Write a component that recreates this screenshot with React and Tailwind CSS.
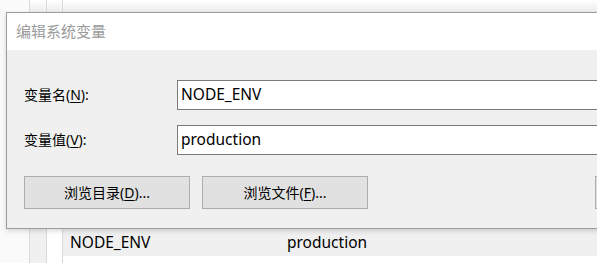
const ui = { fontFamily: '"Noto Sans", "Noto Sans CJK SC", sans-serif' };

const Field = ({ label, mnemonic, value }) => (
  <div className="flex items-center h-[30px]">
    <div className="w-[153px] shrink-0 text-[14px] text-black leading-none">
      {label}(<span className="underline underline-offset-2">{mnemonic}</span>):
    </div>
    <div className="flex-1 h-[30px] bg-white border border-[#7a7a7a] flex items-center pl-[3px] text-[15.5px] text-black">
      {value}
    </div>
  </div>
);

const Btn = ({ label, mnemonic, className = '' }) => (
  <button
    className={`h-[33px] w-[166px] shrink-0 bg-[#e1e1e1] border border-[#adadad] text-[14px] text-black flex items-center justify-center ${className}`}
  >
    {label && (
      <>
        {label}(<span className="underline underline-offset-2">{mnemonic}</span>)...
      </>
    )}
  </button>
);

export default function App() {
  return (
    <div className="relative w-[597px] h-[263px] overflow-hidden bg-white" style={ui}>
      {/* window behind the dialog */}
      <div className="flex h-full">
        <div className="w-[30px] shrink-0 h-full bg-[#fafafa] border-r border-[#dadada]" />
        <div className="w-[17px] shrink-0 h-full flex flex-col border-r border-[#dadada]">
          <div className="h-[12px] shrink-0 bg-gradient-to-b from-white to-[#ececec]" />
          <div className="flex-1 bg-[#f0f0f0]" />
        </div>
        <div className="w-[16px] shrink-0 h-full flex flex-col border-r border-[#dadada]">
          <div className="h-[12px] shrink-0 bg-gradient-to-b from-white to-[#ececec]" />
          <div className="flex-1 bg-white" />
        </div>
        <div className="flex-1 flex flex-col">
          <div className="h-[12px] shrink-0 bg-gradient-to-b from-white to-[#ececec]" />
          <div className="h-[217px] shrink-0 bg-[#f0f0f0]" />
          <div className="h-[27px] shrink-0 bg-[#f0f0f0] flex items-center pl-[7px] text-[15.5px] text-black">
            <span className="w-[217px]">NODE_ENV</span>
            <span>production</span>
          </div>
          <div className="h-[27px] shrink-0 bg-white flex items-center pl-[7px] text-[15.5px] text-black">
            <span className="w-[217px]">NUMBER_OF_PROCESSORS</span>
            <span>8</span>
          </div>
        </div>
      </div>

      {/* dialog */}
      <div className="absolute left-[6px] top-[12px] w-[600px] h-[217px] border border-[#9c9c9c] bg-[#f0f0f0] shadow-[0_2px_5px_rgba(0,0,0,0.15)] flex flex-col">
        <div className="h-[37px] shrink-0 bg-white flex items-center pl-[9px] text-[15px] text-[#9a9a9a]">
          编辑系统变量
        </div>
        <div className="flex flex-col pl-[17px] pt-[30px]">
          <div className="flex flex-col gap-[15px]">
            <Field label="变量名" mnemonic="N" value="NODE_ENV" />
            <Field label="变量值" mnemonic="V" value="production" />
          </div>
          <div className="flex gap-[12px] mt-[21px]">
            <Btn label="浏览目录" mnemonic="D" />
            <Btn label="浏览文件" mnemonic="F" />
            <Btn className="ml-[215px]" />
          </div>
        </div>
      </div>
    </div>
  );
}
